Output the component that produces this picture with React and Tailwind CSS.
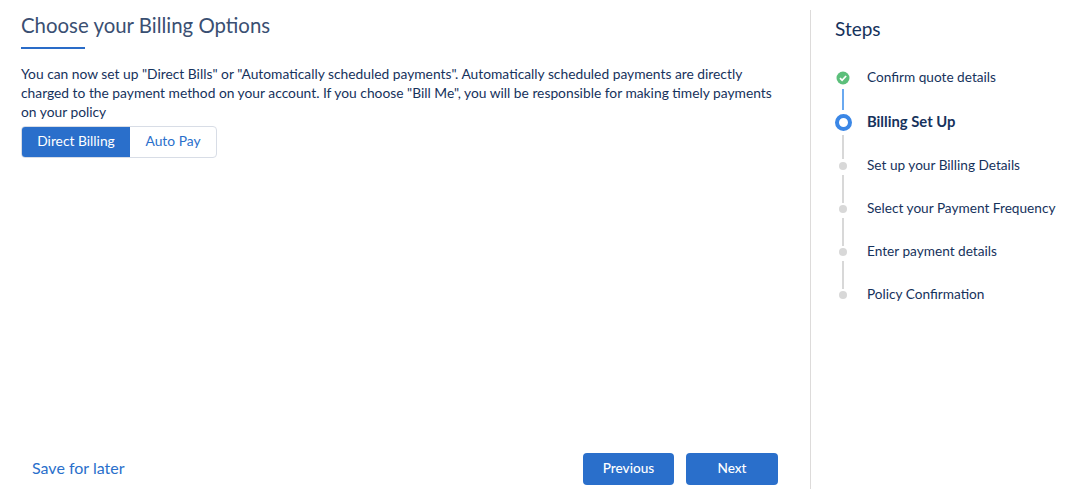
import React from "react";

const font = "font-['Lato','Liberation_Sans',sans-serif]";

function Step({ label, kind, line, lineH, lineMt, bold, h = 43 }) {
  return (
    <div className="flex" style={{ height: h }}>
      <div className="flex w-[18px] flex-col items-center">
        <div className="flex h-[18px] w-[18px] shrink-0 items-center justify-center">
          {kind === "done" && (
            <svg width="14" height="14" viewBox="0 0 14 14">
              <circle cx="7" cy="7" r="6.5" fill="#5cbf7b" />
              <path d="M4 7.2l2.1 2.1L10.1 5" fill="none" stroke="#fff" strokeWidth="1.8" />
            </svg>
          )}
          {kind === "current" && (
            <div className="h-[17px] w-[17px] rounded-full border-[4px] border-[#3b87e6] bg-white" />
          )}
          {kind === "todo" && <div className="h-[8px] w-[8px] rounded-full bg-[#d8d8d8]" />}
        </div>
        {line && (
          <div className="w-[2px] shrink-0" style={{ height: lineH, marginTop: lineMt, background: line }} />
        )}
      </div>
      <div
        className={`ml-[15px] mt-[-1px] h-[18px] whitespace-nowrap leading-[18px] text-[#16325c] ${bold ? "text-[14.8px] font-bold" : "text-[13.65px]"}`}
      >
        {label}
      </div>
    </div>
  );
}

export default function App() {
  return (
    <div className={`${font} flex h-[496px] w-[1070px] overflow-hidden bg-white pb-[7px] pt-[10px] text-[#16325c]`}>
      <div className="flex w-[811px] shrink-0 flex-col border-r border-[#dddbda] pl-[21px] pr-[32px]">
        <h1 className="mt-[2px] text-[20.4px] font-normal leading-[27px] text-[#3a4f72]">Choose your Billing Options</h1>
        <div className="mt-[8px] h-[2px] w-[64px] bg-[#2a6cc8]" />
        <p className="mt-[15px] w-[757px] text-[13.8px] leading-[19px] text-[#16325c]">
          You can now set up "Direct Bills" or "Automatically scheduled payments". Automatically scheduled payments are directly charged to the payment method on your account. If you choose "Bill Me", you will be responsible for making timely payments on your policy
        </p>
        <div className="mt-[5px] flex h-[32px] w-[196px] overflow-hidden rounded-[4px] border border-[#d8dde6] text-[13.8px]">
          <div className="flex w-[108px] items-center justify-center bg-[#2a6fcb] pb-[1px] text-white">Direct Billing</div>
          <div className="flex flex-1 items-center justify-center pb-[1px] text-[#2a6fcb]">Auto Pay</div>
        </div>
        <div className="mb-[4px] mt-auto flex items-center justify-between">
          <a className="ml-[11px] mt-[-2px] text-[16px] text-[#2a6fcb]">Save for later</a>
          <div className="flex gap-[12px] text-[13.6px] font-medium">
            <button className="h-[32px] w-[91px] rounded-[4px] bg-[#2a6fcb] pb-[1px] text-white">Previous</button>
            <button className="h-[32px] w-[92px] rounded-[4px] bg-[#2a6fcb] pb-[1px] text-white">Next</button>
          </div>
        </div>
      </div>
      <div className="pl-[24px]">
        <h2 className="mt-[6px] text-[19px] font-normal leading-[26px] text-[#16325c]">Steps</h2>
        <div className="ml-[-1px] mt-[27px]">
          <Step label="Confirm quote details" kind="done" line="#6aa9f0" lineH={21} lineMt={2} h={44} />
          <Step label="Billing Set Up" kind="current" bold line="#d8d8d8" lineH={24} lineMt={4} h={44} />
          <Step label="Set up your Billing Details" kind="todo" line="#d8d8d8" lineH={28} lineMt={0} />
          <Step label="Select your Payment Frequency" kind="todo" line="#d8d8d8" lineH={28} lineMt={0} />
          <Step label="Enter payment details" kind="todo" line="#d8d8d8" lineH={28} lineMt={0} />
          <Step label="Policy Confirmation" kind="todo" />
        </div>
      </div>
    </div>
  );
}
